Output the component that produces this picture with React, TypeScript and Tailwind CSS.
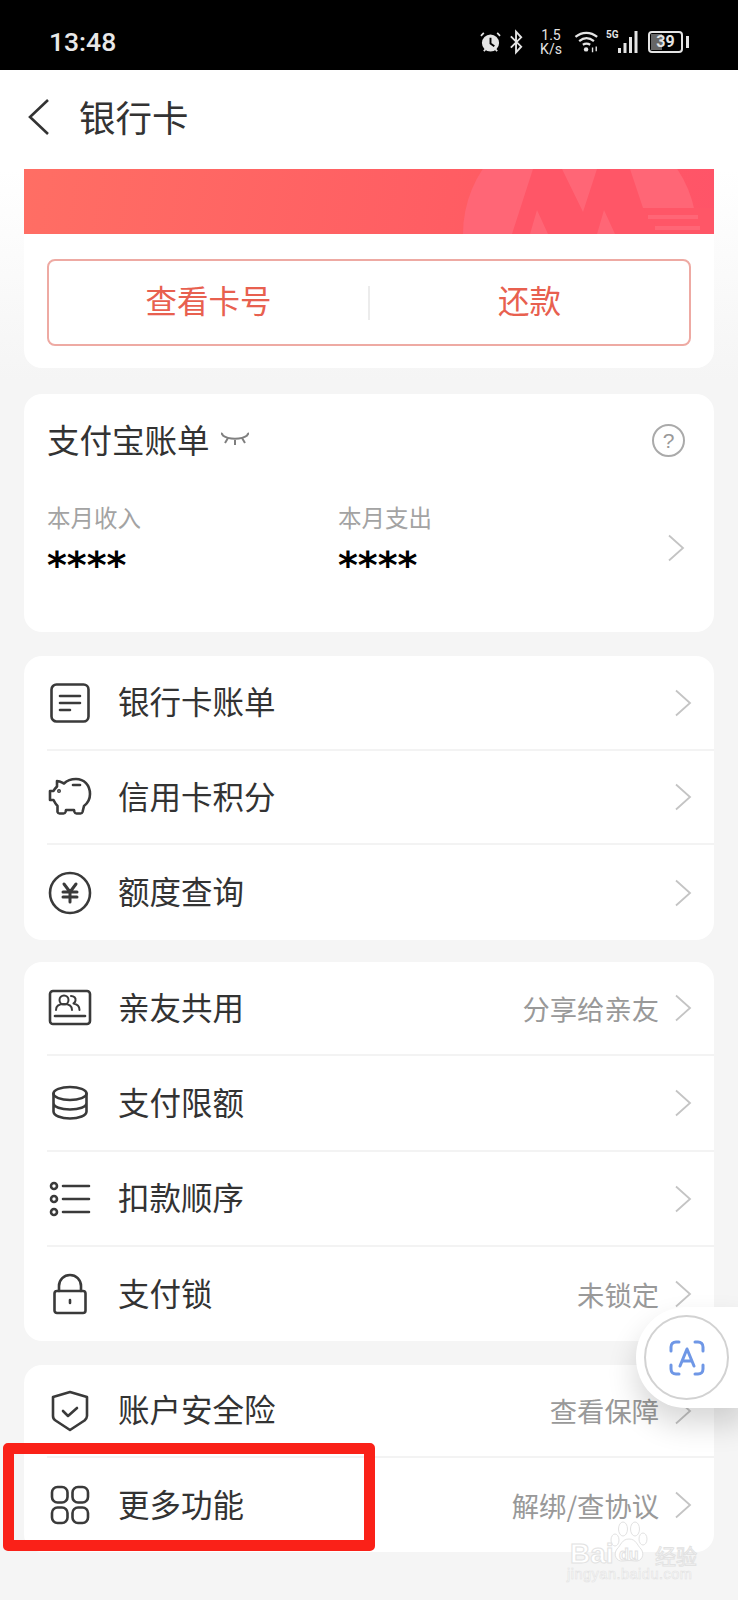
import type { ReactNode } from "react";

const cjk = "font-['Noto_Sans_CJK_SC','Noto_Sans',sans-serif]";

function Chevron({ className = "" }: { className?: string }) {
  return (
    <svg width="18" height="28" viewBox="0 0 18 28" fill="none" className={className}>
      <path d="M2 1.5 16 14 2 26.5" stroke="#c4c4c4" strokeWidth="1.8" />
    </svg>
  );
}

const ic = { fill: "none", stroke: "#3a3a3a", strokeWidth: 2.6, strokeLinecap: "round", strokeLinejoin: "round" } as const;

function BillIcon() {
  return (
    <svg width="42" height="42" viewBox="0 0 42 42" {...ic}>
      <rect x="2.5" y="2.5" width="37" height="37" rx="5" />
      <path d="M11 14h20M11 21h20M11 28h10" />
    </svg>
  );
}

function PiggyIcon() {
  return (
    <svg width="44" height="40" viewBox="0 0 44 40" {...ic}>
      <path d="M9 4c3 0 5 1.500 7 2.500C19 3.500 23 2 28 2c8 0 14 6 14 15 0 5-2 9-6 12l-1.500 6c-.3 1-1 1.500-2 1.500h-4c-1 0-1.700-.5-2-1.500l-.5-2h-8l-.5 2c-.3 1-1 1.500-2 1.500h-4c-1 0-1.700-.5-2-1.500L9.500 29C7.500 27 6.500 25 5.500 23H2v-9h3.500C6.500 12 8 10.500 9 9.500Z" />
      <path d="M25 8h7" />
      <circle cx="11" cy="14" r=".7" />
    </svg>
  );
}

function YuanIcon() {
  return (
    <svg width="44" height="44" viewBox="0 0 44 44" {...ic}>
      <circle cx="22" cy="22" r="20" />
      <path d="m16 13 6 8 6-8M15 21h14M15 26h14M22 21v10" strokeWidth="3" />
    </svg>
  );
}

function FamilyIcon() {
  return (
    <svg width="44" height="38" viewBox="0 0 44 38" {...ic}>
      <rect x="2" y="2" width="40" height="33" rx="3" />
      <circle cx="16" cy="11" r="4.500" strokeWidth="2" />
      <path d="M8 21c0-4 3.500-6 8-6s8 2 8 6M23 7c3 0 5 2 4.500 4.500-.2 1.500-1 2.500-2 3 3 .5 6 2.500 6 6.500" strokeWidth="2" />
      <path d="M7 27h30" />
    </svg>
  );
}

function StackIcon() {
  return (
    <svg width="38" height="36" viewBox="0 0 38 36" {...ic}>
      <ellipse cx="19" cy="8.500" rx="16.500" ry="6.500" />
      <path d="M2.500 8.500v18c0 4 7.500 7 16.500 7s16.500-3 16.500-7v-18M2.500 18c0 4 7.500 6.500 16.500 6.500S35.500 22 35.500 18" />
    </svg>
  );
}

function OrderIcon() {
  return (
    <svg width="42" height="36" viewBox="0 0 42 36" {...ic}>
      <circle cx="5" cy="5" r="3" />
      <circle cx="5" cy="18" r="3" />
      <circle cx="5" cy="31" r="3" />
      <path d="M14 5h26M14 18h26M14 31h26" />
    </svg>
  );
}

function LockIcon() {
  return (
    <svg width="36" height="42" viewBox="0 0 36 42" {...ic}>
      <rect x="2.500" y="18" width="31" height="22" rx="2.500" />
      <path d="M7 18v-5C7 6.500 12 2 18 2s11 4.500 11 11v5M18 27v3" />
    </svg>
  );
}

function ShieldIcon() {
  return (
    <svg width="38" height="42" viewBox="0 0 38 42" {...ic}>
      <path d="M19 2 36 7v19c0 2-1 3-2.500 4.500L19 40 4.500 30.500C3 29.500 2 28 2 26V7Z" />
      <path d="m12 21 5 5 9-8" />
    </svg>
  );
}

function GridIcon() {
  return (
    <svg width="40" height="40" viewBox="0 0 40 40" {...ic}>
      <rect x="2" y="2" width="15.500" height="15.500" rx="5.500" />
      <rect x="22.500" y="2" width="15.500" height="15.500" rx="5.500" />
      <rect x="2" y="22.500" width="15.500" height="15.500" rx="5.500" />
      <rect x="22.500" y="22.500" width="15.500" height="15.500" rx="5.500" />
    </svg>
  );
}

function StatusIcons() {
  return (
    <div className="flex items-center text-[#e4e4e4]">
      {/* alarm */}
      <svg width="23" height="21" viewBox="0 0 24 22" fill="none">
        <circle cx="12" cy="11.500" r="9" fill="#e4e4e4" />
        <path d="M12 6v6l4 3" stroke="#000" strokeWidth="2" />
        <path d="m2 4 3-3M22 4l-3-3M5 20l2-2M19 20l-2-2" stroke="#e4e4e4" strokeWidth="1.800" />
      </svg>
      {/* bluetooth */}
      <svg width="15" height="26" viewBox="0 0 16 26" fill="none" className="ml-[7px]">
        <path d="M2 7l11 11-5.500 6V2L13 8 2 19" stroke="#e4e4e4" strokeWidth="2" />
      </svg>
      <div className="ml-[15px] w-[24px] text-center font-['Roboto',sans-serif] text-[14px] leading-[14px]">
        <div>1.5</div>
        <div>K/s</div>
      </div>
      {/* wifi */}
      <svg width="26" height="24" viewBox="0 0 28 26" fill="none" className="ml-[11px]">
        <path d="M1.500 7.500C8.500 1.500 18 1.500 25 7.500M5.500 12c5-4 11-4 16 0M9.500 16c3-2 5-2 8 0" stroke="#e4e4e4" strokeWidth="2.400" />
        <circle cx="13" cy="21" r="2.400" fill="#e4e4e4" />
        <path d="M20 19v5M24 18v5" stroke="#e4e4e4" strokeWidth="1.500" />
      </svg>
      <div className="relative ml-[6px] h-[24px] w-[33px]">
        <span className="absolute top-[-1px] left-0 font-['Roboto',sans-serif] text-[10px] font-bold leading-[12px]">5G</span>
        <svg width="33" height="24" viewBox="0 0 33 24" fill="#e4e4e4">
          <rect x="12" y="18" width="3" height="5" />
          <rect x="17.500" y="13" width="3" height="10" />
          <rect x="23" y="7" width="3" height="16" />
          <rect x="28.500" y="1" width="3" height="22" />
        </svg>
      </div>
      {/* battery */}
      <div className="ml-[9px] flex items-center">
        <div className="relative h-[22px] w-[35px] overflow-hidden rounded-[4px] border-2 border-[#e4e4e4]">
          <div className="absolute inset-y-[1px] left-[1px] w-[11px] bg-[#666]" />
          <span className="absolute inset-0 text-center font-['Roboto',sans-serif] text-[16px] font-bold leading-[18px]">39</span>
        </div>
        <div className="ml-[3px] h-[12px] w-[3px] bg-[#e4e4e4]" />
      </div>
    </div>
  );
}

type RowProps = { icon: ReactNode; title: string; value?: string; last?: boolean; h: number };

function Row({ icon, title, value, last, h }: RowProps) {
  return (
    <div
      className={`ml-[23px] flex items-center pr-[22px] ${last ? "" : "border-b-2 border-[#f3f3f3]"}`}
      style={{ height: h }}
    >
      <div className="flex w-[46px] justify-center">{icon}</div>
      <div className="ml-[25px] flex-1 pb-[3px] text-[31.5px] text-[#333]">{title}</div>
      {value && <div className="mr-[15px] text-[27.3px] text-[#999]">{value}</div>}
      <Chevron />
    </div>
  );
}

export default function App() {
  return (
    <div className={`relative h-[1600px] w-[738px] overflow-hidden bg-[#f5f5f5] ${cjk}`}>
      <div className="flex h-[70px] items-center justify-between bg-black pt-[14px] pr-[49px] pl-[49px]">
        <div className="font-['Roboto',sans-serif] text-[26.5px] font-medium text-[#e8e8e8]">13:48</div>
        <StatusIcons />
      </div>

      <div className="bg-[linear-gradient(#ffffff_0,#ffffff_100px,#f5f5f5_310px)]">
        <div className="flex h-[99px] items-center pb-[5px] pl-[27px]">
          <svg width="24" height="38" viewBox="0 0 24 38" fill="none">
            <path d="M21 2 3 19l18 17" stroke="#333" strokeWidth="2.600" />
          </svg>
          <div className="ml-[28px] text-[36.5px] text-[#333]">银行卡</div>
        </div>

        <div className="mx-[24px] flex flex-col gap-[24px]">
          <div className="h-[199px] overflow-hidden rounded-b-[18px] bg-white">
            <div className="relative h-[65px] bg-[linear-gradient(100deg,#ff6e64,#ff5c63_65%,#ff5468)]">
              <svg width="690" height="65" viewBox="0 0 690 65" className="absolute inset-0">
                <circle cx="556" cy="65" r="117" fill="#ff6676" />
                <path d="M619 39H690V65H619Z" fill="#ff5667" />
                <path d="M488 65 509 0h29l21 43L573 0h33l13 39 20 26Z" fill="#ff5667" />
                <path d="M506 65 513 41l11 24ZM573 65 580 41l11 24Z" fill="#ff6676" />
                <path d="M624 46h50v4h-50ZM631 57h45v4h-45Z" fill="#ff6676" />
              </svg>
            </div>
            <div className="mx-[23px] mt-[25px] flex h-[87px] items-center rounded-[8px] border-2 border-[#eeaaa3] text-[31.5px] text-[#e8604f]">
              <div className="flex-1 pb-[6px] text-center">查看卡号</div>
              <div className="h-[34px] w-[2px] bg-[#ececec]" />
              <div className="flex-1 pb-[6px] text-center">还款</div>
            </div>
          </div>

          <div className="mt-[2px] h-[238px] rounded-[18px] bg-white pr-[29px] pl-[23px]">
            <div className="flex items-center justify-between pt-[21px]">
              <div className="flex items-center">
                <div className="text-[32.5px] leading-[48px] text-[#333]">支付宝账单</div>
                <svg width="28" height="14" viewBox="0 0 28 14" fill="none" className="ml-[11px]" stroke="#7f7f7f" strokeWidth="2">
                  <path d="M1 3c7 5 19 5 26 0M7 6l-3 5M14 8v5M21 6l3 5M2 3 0 1M26 3l2-2" />
                </svg>
              </div>
              <div className="mt-[3px] flex h-[33px] w-[33px] items-center justify-center rounded-full border-2 border-[#aaa] font-['Liberation_Sans',sans-serif] text-[21px] text-[#999]">?</div>
            </div>
            <div className="mt-[37px] flex items-center">
              <div className="w-[291px]">
                <div className="text-[23.5px] leading-[34px] text-[#a3a3a3]">本月收入</div>
                <div className="mt-[8px] font-['DejaVu_Sans',sans-serif] text-[38px] font-bold leading-[46px] text-black">****</div>
              </div>
              <div className="flex-1">
                <div className="text-[23.5px] leading-[34px] text-[#a3a3a3]">本月支出</div>
                <div className="mt-[8px] font-['DejaVu_Sans',sans-serif] text-[38px] font-bold leading-[46px] text-black">****</div>
              </div>
              <Chevron className="mt-[7px]" />
            </div>
          </div>

          <div className="h-[284px] rounded-[18px] bg-white">
            <Row h={95} icon={<BillIcon />} title="银行卡账单" />
            <Row h={94} icon={<PiggyIcon />} title="信用卡积分" />
            <Row h={95} icon={<YuanIcon />} title="额度查询" last />
          </div>

          <div className="-mt-[2px] h-[379px] rounded-[18px] bg-white">
            <Row h={94} icon={<FamilyIcon />} title="亲友共用" value="分享给亲友" />
            <Row h={96} icon={<StackIcon />} title="支付限额" />
            <Row h={95} icon={<OrderIcon />} title="扣款顺序" />
            <Row h={94} icon={<LockIcon />} title="支付锁" value="未锁定" last />
          </div>

          <div className="h-[187px] rounded-[18px] bg-white">
            <Row h={93} icon={<ShieldIcon />} title="账户安全险" value="查看保障" />
            <Row h={94} icon={<GridIcon />} title="更多功能" value="解绑/查协议" last />
          </div>
        </div>
      </div>

      {/* floating translate button */}
      <div className="absolute top-[1307px] left-[636px] flex h-[101px] w-[110px] items-center rounded-l-[50px] bg-white pl-[8px] shadow-[0_16px_30px_rgba(0,0,0,0.16)]">
        <div className="flex h-[85px] w-[85px] items-center justify-center rounded-full border-2 border-[#d2d2d2]">
          <svg width="36" height="36" viewBox="0 0 36 36" fill="none" stroke="#6f97e6" strokeWidth="3" strokeLinecap="round" strokeLinejoin="round">
            <path d="M2 11V7c0-3 2-5 5-5h3M26 2h3c3 0 5 2 5 5v4M34 25v4c0 3-2 5-5 5h-3M10 34H7c-3 0-5-2-5-5v-4" />
            <path d="m11 26 7-17 7 17M13.500 21h9" />
          </svg>
        </div>
      </div>

      {/* red highlight drawn over the screenshot */}
      <div className="absolute top-[1443px] left-[3px] h-[108px] w-[372px] rounded-[5px] border-[11px] border-[#fa2118]" />

      {/* watermark */}
      <div className="absolute top-[1518px] left-[567px] h-[66px] w-[135px] font-['Liberation_Sans',sans-serif] text-white [-webkit-text-stroke:1px_#e2e2e2]">
        <svg width="38" height="45" viewBox="0 0 38 45" className="absolute top-[2px] left-[43px]" fill="#ffffff" stroke="#e2e2e2" strokeWidth="1">
          <ellipse cx="5" cy="20" rx="4" ry="6" />
          <ellipse cx="13" cy="9" rx="4.500" ry="7" />
          <ellipse cx="25" cy="9" rx="4.500" ry="7" />
          <ellipse cx="33" cy="19" rx="4" ry="6" />
          <path d="M19 19c7 0 8 6 12 10 4 5 1 13-6 12-4-.6-8-.6-12 0-7 1-10-7-6-12 4-4 5-10 12-10Z" />
        </svg>
        <span className="absolute top-[24px] left-[3px] text-[28px] font-bold leading-[24px]">Bai</span>
        <span className="absolute top-[28px] left-[52px] text-[16px] font-bold leading-[18px]">du</span>
        <span className={`absolute top-[25px] left-[88px] text-[21px] leading-[24px] ${cjk}`}>经验</span>
        <span className="absolute top-[49px] left-0 whitespace-nowrap text-[14.500px] leading-[14px] tracking-[0.5px] [-webkit-text-stroke:0.6px_#e2e2e2]">jingyan.baidu.com</span>
      </div>
    </div>
  );
}
